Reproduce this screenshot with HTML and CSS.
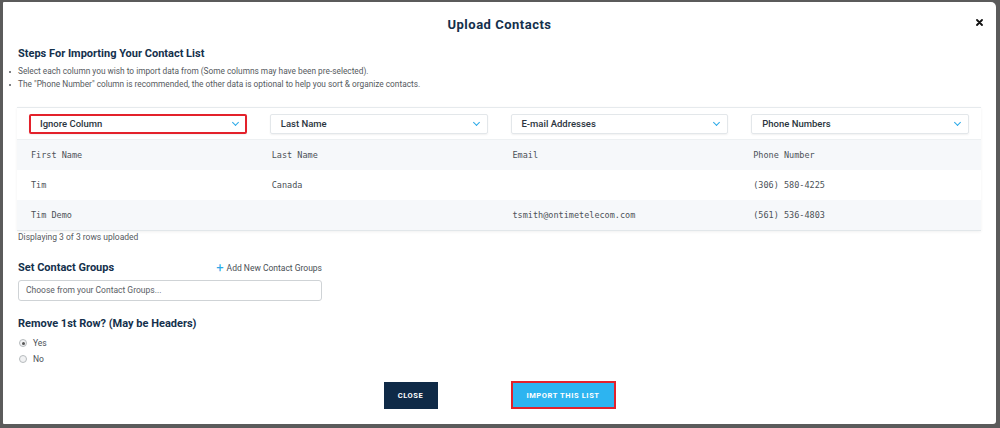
FILE: index.html
```html
<!DOCTYPE html>
<html>
<head lang="en">
    <meta charset="utf-8">
    <title>Upload Contacts</title>
    <link rel="stylesheet" href="styles.css">
</head>
<body>

<div class="modal">
    <div class="modal-head">
        <h1>Upload Contacts</h1>
        <a href="#" class="close-x">
            <svg width="7" height="7" viewBox="0 0 7 7"><path d="M1 1L6 6M6 1L1 6" stroke="#111" stroke-width="1.8" stroke-linecap="round"/></svg>
        </a>
    </div>

    <h2 class="steps-title">Steps For Importing Your Contact List</h2>
    <ul class="steps">
        <li>Select each column you wish to import data from (Some columns may have been pre-selected).</li>
        <li>The "Phone Number" column is recommended, the other data is optional to help you sort &amp; organize contacts.</li>
    </ul>

    <div class="card">
        <div class="row select-row">
            <div class="select marked">Ignore Column <span class="chev"></span></div>
            <div class="select">Last Name <span class="chev"></span></div>
            <div class="select">E-mail Addresses <span class="chev"></span></div>
            <div class="select">Phone Numbers <span class="chev"></span></div>
        </div>
        <div class="row data alt">
            <div>First Name</div><div>Last Name</div><div>Email</div><div>Phone Number</div>
        </div>
        <div class="row data">
            <div>Tim</div><div>Canada</div><div></div><div>(306) 580-4225</div>
        </div>
        <div class="row data alt">
            <div>Tim Demo</div><div></div><div>tsmith@ontimetelecom.com</div><div>(561) 536-4803</div>
        </div>
    </div>
    <p class="count">Displaying 3 of 3 rows uploaded</p>

    <div class="groups-head">
        <h3>Set Contact Groups</h3>
        <a href="#" class="add-link"><span class="plus">+</span> Add New Contact Groups</a>
    </div>
    <div class="group-input">Choose from your Contact Groups...</div>

    <h3 class="remove-title">Remove 1st Row? (May be Headers)</h3>
    <div class="radios">
        <label class="radio"><span class="dot on"></span>Yes</label>
        <label class="radio"><span class="dot"></span>No</label>
    </div>

    <div class="actions">
        <a href="#" class="btn btn-dark">Close</a>
        <a href="#" class="btn btn-blue">Import This List</a>
    </div>
</div>

</body>
</html>
```

FILE: styles.css
```css
* { box-sizing: border-box; }

body {
    margin: 0;
    background: #5b5b5b;
    font-family: Roboto, 'Liberation Sans', sans-serif;
    color: #4a4f55;
}

.modal {
    margin: 2px 4px 0 3px;
    height: 422px;
    background: #fff;
    border-radius: 1px 5px 3px 1px;
    padding: 0 15px;
    position: relative;
}

.modal-head {
    height: 42px;
    display: flex;
    align-items: center;
    justify-content: center;
    padding-top: 2px;
}

.modal-head h1 {
    margin: 0;
    font-size: 13px;
    font-weight: 700;
    letter-spacing: 0.5px;
    color: #14304c;
}

.close-x {
    position: absolute;
    top: 17px;
    right: 13px;
    line-height: 0;
}

h2, h3 {
    margin: 0;
    color: #14304c;
    font-weight: 700;
}

.steps-title {
    font-size: 11px;
    line-height: 16px;
    margin-top: 2px;
}

.steps {
    margin: 3px 0 0 -12px;
    padding: 0 0 0 12px;
    font-size: 8.3px;
    line-height: 13px;
    color: #55595e;
    list-style: none;
}

.steps li { position: relative; }

.steps li:before {
    content: "";
    position: absolute;
    left: -9px;
    top: 6px;
    width: 2px;
    height: 2px;
    border-radius: 1px;
    background: #55595e;
}

.card {
    margin: 16px 0 0 -1px;
    border-top: 1px solid #e6eaed;
    border-bottom: 1px solid #e2e7ea;
    box-shadow: 0 1px 3px rgba(0, 0, 0, 0.06);
}

.row {
    display: grid;
    grid-template-columns: repeat(4, 1fr);
    column-gap: 23px;
    padding: 0 12px;
    align-items: center;
}

.select-row {
    height: 32px;
    border-bottom: 1px solid #edf0f2;
}

.select {
    height: 20px;
    border: 1px solid #e3e7ea;
    border-radius: 2px;
    box-shadow: 0 1px 2px rgba(0, 0, 0, 0.06);
    display: flex;
    align-items: center;
    padding-left: 10px;
    font-size: 9.5px;
    font-weight: 500;
    color: #2b3540;
    position: relative;
}

.select.marked {
    border: 2px solid #e3212b;
    padding-left: 9px;
}

.chev {
    position: absolute;
    right: 8px;
    top: 5px;
    width: 5px;
    height: 5px;
    border-right: 1.2px solid #2aa9e8;
    border-bottom: 1.2px solid #2aa9e8;
    transform: rotate(45deg);
}

.marked .chev { right: 7px; top: 4px; }

.data {
    height: 30px;
    font-family: 'DejaVu Sans Mono', 'Liberation Mono', monospace;
    font-size: 8.5px;
    color: #4b5157;
}

.data div { padding-left: 2px; }

.alt { background: #f6f8fa; }

.count {
    margin: 0;
    font-size: 8.5px;
    line-height: 12px;
    color: #55595e;
}

.groups-head {
    display: flex;
    align-items: center;
    width: 304px;
    justify-content: space-between;
    margin-top: 18px;
}

.groups-head h3 {
    font-size: 11px;
    line-height: 14px;
}

.add-link {
    font-size: 8.5px;
    color: #4a4f55;
    text-decoration: none;
    display: flex;
    align-items: center;
}

.plus {
    color: #2aa9e8;
    font-size: 13px;
    font-weight: 400;
    margin-right: 3px;
    line-height: 10px;
}

.group-input {
    margin-top: 5px;
    width: 304px;
    height: 21px;
    border: 1px solid #cfd3d6;
    border-radius: 3px;
    padding-left: 7px;
    font-size: 8.5px;
    line-height: 19px;
    color: #5b6066;
}

.remove-title {
    font-size: 11px;
    line-height: 14px;
    margin-top: 16px;
}

.radios {
    margin-top: 4px;
}

.radio {
    display: flex;
    align-items: center;
    height: 16px;
    font-size: 8.5px;
    color: #4a4f55;
}

.dot {
    width: 8px;
    height: 8px;
    border-radius: 50%;
    border: 1px solid #b7bbbe;
    background: #f1f2f3;
    margin: 0 6px 0 1px;
    position: relative;
}

.dot.on:after {
    content: "";
    position: absolute;
    left: 1.5px;
    top: 1.5px;
    width: 3px;
    height: 3px;
    border-radius: 50%;
    background: #555;
}

.actions {
    display: flex;
    justify-content: center;
    align-items: center;
    gap: 73px;
    margin-top: 14px;
}

.btn {
    display: flex;
    align-items: center;
    justify-content: center;
    height: 27px;
    font-size: 7.5px;
    font-weight: 700;
    letter-spacing: 0.6px;
    text-transform: uppercase;
    color: #fff;
    text-decoration: none;
}

.btn-dark {
    width: 54px;
    background: #0f2a47;
}

.btn-blue {
    width: 105px;
    height: 28px;
    background: #2db4f0;
    border: 2px solid #e3212b;
}
```
